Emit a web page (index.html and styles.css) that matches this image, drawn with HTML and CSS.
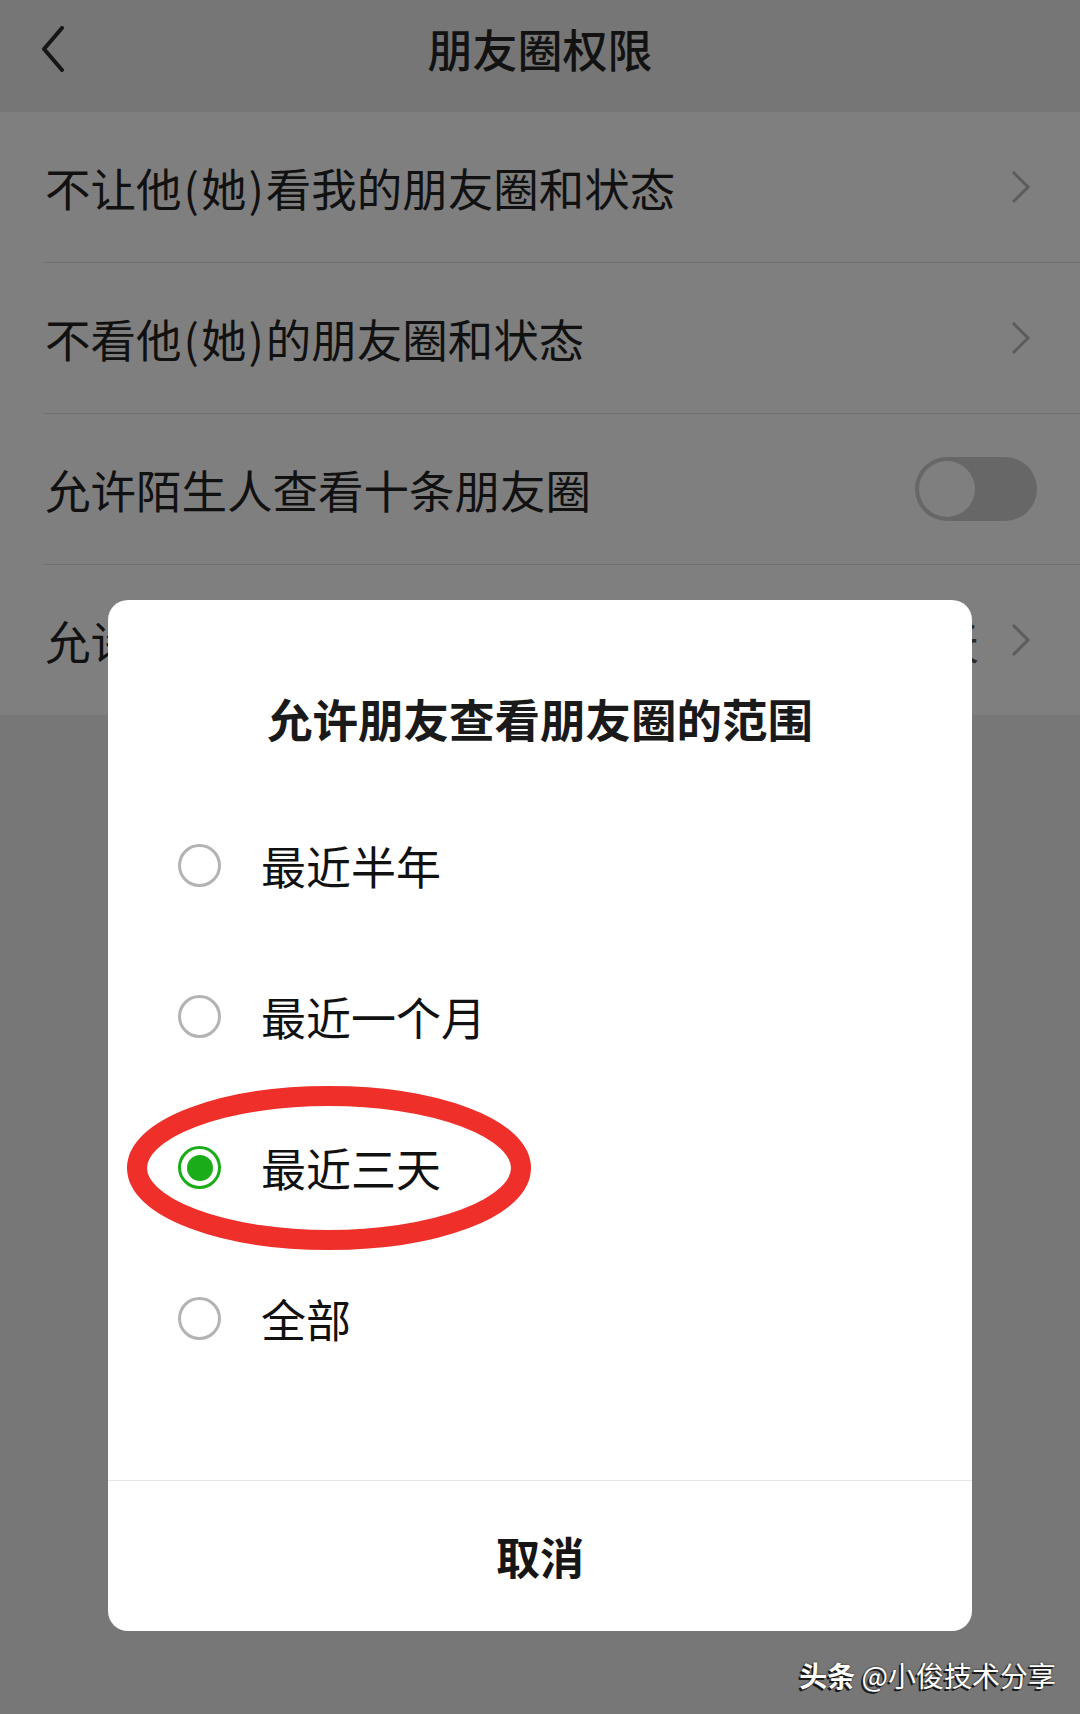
FILE: index.html
```html
<!DOCTYPE html>
<html lang="zh-CN">
<head>
    <meta charset="UTF-8">
    <meta name="viewport" content="width=device-width, initial-scale=1.0">
    <title>朋友圈权限</title>
    <link rel="stylesheet" href="styles.css">
</head>
<body>
    <div class="screen">
        <!-- Top bar -->
        <div class="nav">
            <span class="back">
                <svg width="26" height="46" viewBox="0 0 26 46"><polyline points="22,2 4,23 22,44" fill="none" stroke="#161616" stroke-width="4" stroke-linecap="round" stroke-linejoin="round"/></svg>
            </span>
            <h1 class="nav-title">朋友圈权限</h1>
            <span></span>
        </div>

        <!-- Settings list -->
        <div class="list">
            <div class="row">
                <div class="row-inner">
                    <span class="row-label">不让他<span class="paren">(</span>她<span class="paren">)</span>看我的朋友圈和状态</span>
                    <svg class="chevron" width="20" height="34" viewBox="0 0 20 34"><polyline points="2,2 17,17 2,32" fill="none" stroke="#5c5c5c" stroke-width="3"/></svg>
                </div>
            </div>
            <div class="row">
                <div class="row-inner">
                    <span class="row-label">不看他<span class="paren">(</span>她<span class="paren">)</span>的朋友圈和状态</span>
                    <svg class="chevron" width="20" height="34" viewBox="0 0 20 34"><polyline points="2,2 17,17 2,32" fill="none" stroke="#5c5c5c" stroke-width="3"/></svg>
                </div>
            </div>
            <div class="row">
                <div class="row-inner">
                    <span class="row-label">允许陌生人查看十条朋友圈</span>
                    <span class="switch"><span class="knob"></span></span>
                </div>
            </div>
            <div class="row last">
                <div class="row-inner">
                    <span class="row-label">允许朋友查看朋友圈的范围</span>
                    <span class="row-value">最近三天</span>
                    <svg class="chevron" width="20" height="34" viewBox="0 0 20 34"><polyline points="2,2 17,17 2,32" fill="none" stroke="#5c5c5c" stroke-width="3"/></svg>
                </div>
            </div>
        </div>

        <!-- Range dialog -->
        <div class="dialog">
            <h2 class="dialog-title">允许朋友查看朋友圈的范围</h2>
            <div class="options">
                <div class="option">
                    <span class="radio"></span>
                    <span class="option-text">最近半年</span>
                </div>
                <div class="option">
                    <span class="radio"></span>
                    <span class="option-text">最近一个月</span>
                </div>
                <div class="option selected">
                    <span class="radio checked"></span>
                    <span class="option-text">最近三天</span>
                    <svg class="mark" width="406" height="166" viewBox="0 0 406 166"><ellipse cx="203" cy="83" rx="192" ry="72" fill="none" stroke="#ef2f2a" stroke-width="20"/></svg>
                </div>
                <div class="option">
                    <span class="radio"></span>
                    <span class="option-text">全部</span>
                </div>
            </div>
            <div class="dialog-cancel">取消</div>
        </div>

        <div class="watermark"><b>头条</b> @小俊技术分享</div>
    </div>
</body>
</html>
```

FILE: styles.css
```css
/* General */
body {
    margin: 0;
    padding: 0;
    background-color: #777777;
    font-family: "Noto Sans CJK SC", "Noto Sans", sans-serif;
    color: #111111;
}

.screen {
    position: relative;
    width: 1080px;
    height: 1714px;
    overflow: hidden;
}

/* Top bar */
.nav {
    height: 112px;
    box-sizing: border-box;
    padding-bottom: 14px;
    background-color: #767676;
    display: grid;
    grid-template-columns: 1fr auto 1fr;
    align-items: center;
}

.back {
    padding-left: 40px;
    display: flex;
    align-items: center;
}

.nav-title {
    margin: 0;
    font-size: 45px;
    font-weight: 500;
    line-height: 60px;
    color: #121212;
}

/* List */
.list {
    background-color: #7f7f7f;
}

.row {
    padding-left: 43px;
}

.row-inner {
    height: 150px;
    display: flex;
    align-items: center;
    padding-left: 2px;
    padding-right: 49px;
    border-bottom: 1px solid #717171;
}

.row.last .row-inner {
    border-bottom: none;
}

.row-label {
    flex: 1;
    font-size: 45.5px;
    line-height: 60px;
    white-space: nowrap;
}

.paren {
    padding: 0 2px;
}

.row-value {
    font-size: 45.5px;
    line-height: 60px;
    color: #2b2b2b;
    margin-right: 32px;
}

.chevron {
    display: block;
}

/* Switch */
.switch {
    width: 122px;
    height: 64px;
    box-sizing: border-box;
    padding: 4px;
    border-radius: 32px;
    background-color: #676767;
    margin-right: -6px;
    display: flex;
    align-items: center;
}

.knob {
    width: 56px;
    height: 56px;
    border-radius: 50%;
    background-color: #7f7f7f;
}

/* Dialog */
.dialog {
    position: absolute;
    top: 600px;
    left: 108px;
    width: 864px;
    background-color: #ffffff;
    border-radius: 20px;
    padding-top: 86px;
}

.dialog-title {
    margin: 0;
    text-align: center;
    font-size: 45.5px;
    font-weight: 700;
    line-height: 64px;
    color: #1a1a1a;
}

.options {
    margin-top: 40px;
    padding-bottom: 86px;
}

.option {
    position: relative;
    height: 151px;
    display: flex;
    align-items: center;
    padding-left: 70px;
}

.radio {
    width: 43px;
    height: 43px;
    box-sizing: border-box;
    border: 3px solid #b3b3b3;
    border-radius: 50%;
    margin-right: 40px;
    display: flex;
    align-items: center;
    justify-content: center;
}

.radio.checked {
    border-color: #1aad19;
}

.radio.checked::after {
    content: "";
    width: 26px;
    height: 26px;
    border-radius: 50%;
    background-color: #1aad19;
}

.option-text {
    font-size: 45px;
    line-height: 60px;
    color: #111111;
}

.mark {
    position: absolute;
    left: 18px;
    top: -7px;
}

.dialog-cancel {
    height: 150px;
    border-top: 1px solid #e6e6e6;
    display: flex;
    align-items: center;
    justify-content: center;
    font-size: 44px;
    font-weight: 700;
    color: #161616;
}

/* Watermark */
.watermark {
    position: absolute;
    right: 24px;
    top: 1656px;
    font-size: 28px;
    line-height: 38px;
    color: #ffffff;
    text-shadow: -2px 2px 0 #1a1a1a, 0 0 2px #1a1a1a;
}

.watermark b {
    font-weight: 700;
}
```
